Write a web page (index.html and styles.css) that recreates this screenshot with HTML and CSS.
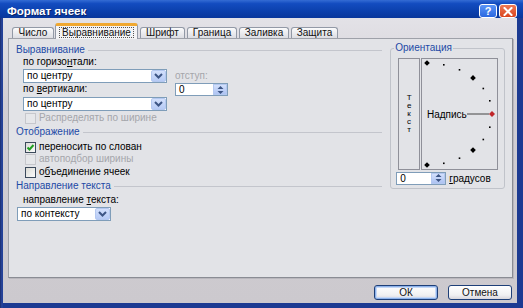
FILE: index.html
```html
<!DOCTYPE html>
<html lang="ru">
<head>
<meta charset="utf-8">
<title>Формат ячеек</title>
<link rel="stylesheet" href="styles.css">
</head>
<body>
<div class="window">
  <div class="titlebar">
    <span class="title">Формат ячеек</span>
    <div class="caption-buttons">
      <span class="cap-btn help">?</span>
      <span class="cap-btn close"><svg width="10" height="9" viewBox="0 0 10 9"><path d="M1.5 1 L8.5 8 M8.5 1 L1.5 8" stroke="#fff" stroke-width="2" stroke-linecap="square"/></svg></span>
    </div>
  </div>
  <div class="frame">
    <div class="tabs">
      <span class="tab">Число</span>
      <span class="tab active"><span class="focus">Выравнивание</span></span>
      <span class="tab">Шрифт</span>
      <span class="tab">Граница</span>
      <span class="tab">Заливка</span>
      <span class="tab">Защита</span>
    </div>
    <div class="panel">
      <div class="left">
        <div class="group-head"><span>Выравнивание</span></div>
        <div class="align-grid">
          <div class="label">по горизо<u>н</u>тали:</div>
          <div></div>
          <div class="combo row-end"><span class="combo-text">по центру</span><span class="drop"><svg width="9" height="6" viewBox="0 0 9 6"><path d="M1 1 L4.5 4.5 L8 1" fill="none" stroke="#3d5585" stroke-width="2"/></svg></span></div>
          <div class="label disabled indent-label">отступ:</div>
          <div class="label">по <u>в</u>ертикали:</div>
          <div class="spin indent-spin"><span class="spin-text">0</span><span class="spin-btn"><svg width="9" height="10" viewBox="0 0 9 10"><path d="M1.5 4 L4.5 1 L7.5 4 Z M1.5 6 L4.5 9 L7.5 6 Z" fill="#3d5585"/></svg></span></div>
          <div class="combo row-start"><span class="combo-text">по центру</span><span class="drop"><svg width="9" height="6" viewBox="0 0 9 6"><path d="M1 1 L4.5 4.5 L8 1" fill="none" stroke="#3d5585" stroke-width="2"/></svg></span></div>
          <div></div>
        </div>
        <div class="check disabled first-check"><span class="box"></span><span>Распределять по ширине</span></div>
        <div class="group-head head-2"><span>Отображение</span></div>
        <div class="check check-a"><span class="box"><svg width="9" height="9" viewBox="0 0 9 9"><path d="M1.5 4.5 L3.5 6.5 L7.5 2" fill="none" stroke="#21a121" stroke-width="2"/></svg></span><span>переносить по слован</span></div>
        <div class="check disabled"><span class="box"></span><span>автоподбор ширины</span></div>
        <div class="check check-c"><span class="box"></span><span>о<u>б</u>ъединение ячеек</span></div>
        <div class="group-head head-3"><span>Направление текста</span></div>
        <div class="label sub-label">направление <u>т</u>екста:</div>
        <div class="combo short"><span class="combo-text">по контексту</span><span class="drop"><svg width="9" height="6" viewBox="0 0 9 6"><path d="M1 1 L4.5 4.5 L8 1" fill="none" stroke="#3d5585" stroke-width="2"/></svg></span></div>
      </div>
      <fieldset class="orient">
        <legend>Ориентация</legend>
        <div class="orient-boxes">
          <div class="vbox">
            <span>Т</span><span>е</span><span>к</span><span>с</span><span>т</span>
          </div>
          <div class="arcbox">
            <svg width="75" height="110" viewBox="0 0 75 110">
              <g fill="#000">
                <polygon points="5,1.2 7.8,4 5,6.8 2.2,4"/>
                <rect x="21" y="5" width="1.6" height="1.6"/>
                <rect x="36.7" y="10" width="1.6" height="1.6"/>
                <polygon points="51,16.1 53.8,18.9 51,21.7 48.2,18.9"/>
                <rect x="60.5" y="28.7" width="1.6" height="1.6"/>
                <rect x="67" y="41" width="1.6" height="1.6"/>
                <rect x="67" y="67.4" width="1.6" height="1.6"/>
                <rect x="60.5" y="79.7" width="1.6" height="1.6"/>
                <polygon points="51,88.3 53.8,91.1 51,93.9 48.2,91.1"/>
                <rect x="36.7" y="98.4" width="1.6" height="1.6"/>
                <rect x="21" y="103.5" width="1.6" height="1.6"/>
                <polygon points="5,103.2 7.8,106 5,108.8 2.2,106"/>
              </g>
              <line x1="45" y1="55" x2="67" y2="55" stroke="#444" stroke-width="1"/>
              <polygon points="70,52 73,55 70,58 67,55" fill="#c0262a"/>
              <text x="5" y="58.5" font-family="Liberation Sans, Arial, sans-serif" font-size="10" fill="#000">Надпись</text>
            </svg>
          </div>
        </div>
        <div class="deg-row">
          <div class="spin deg-spin"><span class="spin-text">0</span><span class="spin-btn"><svg width="9" height="10" viewBox="0 0 9 10"><path d="M1.5 4 L4.5 1 L7.5 4 Z M1.5 6 L4.5 9 L7.5 6 Z" fill="#3d5585"/></svg></span></div>
          <span class="deg-label"><u>г</u>радусов</span>
        </div>
      </fieldset>
    </div>
    <div class="buttons">
      <span class="btn default">ОК</span>
      <span class="btn">Отмена</span>
    </div>
  </div>
</div>
</body>
</html>
```

FILE: styles.css
```css
* { box-sizing: border-box; }
html, body { margin: 0; padding: 0; }
body {
  width: 523px;
  height: 308px;
  overflow: hidden;
  background: #14307f;
  font-family: "Liberation Sans", Arial, sans-serif;
  font-size: 10px;
  color: #000;
}
u { text-decoration: underline; text-underline-offset: 1px; }

.window {
  width: 523px;
  height: 308px;
  display: flex;
  flex-direction: column;
  background: linear-gradient(90deg, #1a2c6e 0, #2a48a0 2px, #1c3a92 3px, #1c3a92 100%);
}

.titlebar {
  height: 18px;
  flex: none;
  display: flex;
  align-items: center;
  justify-content: space-between;
  padding: 3px 6px 0 7px;
  background: linear-gradient(#346cd4 0%, #134cc0 20%, #0c41ae 60%, #09379c 100%);
}
.title {
  color: #fff;
  font-weight: bold;
  font-size: 11.5px;
  text-shadow: 1px 1px 0 #0b2366;
}
.caption-buttons { display: flex; gap: 2px; margin-top: 1px; }
.cap-btn {
  width: 18px;
  height: 14px;
  border: 1px solid #fff;
  border-radius: 3px;
  display: flex;
  align-items: center;
  justify-content: center;
  color: #fff;
  font-weight: bold;
  font-size: 11px;
}
.help { background: linear-gradient(#5b95f7, #2a67e0); }
.close { background: linear-gradient(#ef7a55, #d9441e); }

.frame {
  flex: 1;
  margin: 0 6px 5px 3px;
  background: linear-gradient(#e3e2e7, #d1ced4 30%, #ccc9ce);
  padding: 4px 4px 3px 5px;
  display: flex;
  flex-direction: column;
}

.tabs {
  height: 16px;
  flex: none;
  display: flex;
  align-items: flex-end;
  gap: 2px;
  padding-left: 4px;
  position: relative;
  z-index: 1;
}
.tab {
  height: 11px;
  border: 1px solid #9299a6;
  border-bottom: none;
  border-radius: 3px 3px 0 0;
  background: linear-gradient(#fbfbfc, #dcdde3);
  line-height: 10px;
  text-align: center;
  color: #111;
}
.tab:nth-child(1) { width: 42px; }
.tab:nth-child(3) { width: 45px; }
.tab:nth-child(4) { width: 50px; }
.tab:nth-child(5) { width: 50px; }
.tab:nth-child(6) { width: 47px; }
.tab.active {
  width: 83px;
  height: 16px;
  margin-left: -1px;
  margin-bottom: -1px;
  border-top: 3px solid #f0a830;
  background: #f3f3f5;
  display: flex;
  align-items: center;
  justify-content: center;
  padding-bottom: 1px;
}
.focus {
  border: 1px dotted #555;
  padding: 0 2px;
  line-height: 9px;
}

.panel {
  flex: 1;
  border: 1px solid #9ea1a9;
  border-right-color: #8a8c94;
  border-bottom-color: #8a8c94;
  box-shadow: 1px 1px 0 #b9b7bd;
  background: #e2e3e7;
  padding: 0 7px;
  display: flex;
  align-items: flex-start;
  gap: 8px;
}

.left {
  width: 367px;
  padding-top: 5px;
  display: flex;
  flex-direction: column;
}

.group-head {
  height: 12px;
  line-height: 12px;
  display: flex;
  align-items: center;
  color: #1d4aa6;
}
.group-head::after {
  content: "";
  flex: 1;
  height: 1px;
  margin-left: 3px;
  background: #c3c5cc;
}
.head-2 { margin-top: 2px; }
.head-3 { margin-top: 2px; }

.label { height: 12px; line-height: 12px; white-space: nowrap; }
.disabled { color: #a5a6ab; }

.align-grid {
  margin-left: 7px;
  display: grid;
  grid-template-columns: 144px 53px;
  grid-template-rows: 12px 15px 13px 15px;
  column-gap: 8px;
}
.row-end { align-self: end; }
.row-start { align-self: start; margin-top: 1px; }
.indent-label { align-self: center; }
.indent-spin { align-self: start; }

.combo {
  height: 14px;
  border: 1px solid #7f9db9;
  background: #fff;
  display: flex;
  align-items: stretch;
}
.combo.short { width: 94px; margin-left: 1px; margin-top: 1px; }
.combo-text { flex: 1; padding-left: 3px; line-height: 12px; }
.drop {
  width: 15px;
  border: 1px solid #b4c8f0;
  border-radius: 2px;
  background: linear-gradient(#d3e0fc, #b6caf5);
  display: flex;
  align-items: center;
  justify-content: center;
}

.spin {
  height: 13px;
  border: 1px solid #7f9db9;
  background: #fff;
  display: flex;
  align-items: stretch;
}
.spin-text { flex: 1; padding-left: 3px; line-height: 11px; }
.spin-btn {
  width: 14px;
  border: 1px solid #b4c8f0;
  background: linear-gradient(#d3e0fc, #aec3f2);
  display: flex;
  align-items: center;
  justify-content: center;
}

.check {
  height: 12px;
  line-height: 12px;
  display: flex;
  align-items: center;
  margin-left: 9px;
  white-space: nowrap;
}
.check .box {
  width: 11px;
  height: 11px;
  border: 1px solid #3c4a5c;
  background: linear-gradient(135deg, #dcdcd6, #fafafa);
  margin-right: 3px;
  display: flex;
  align-items: center;
  justify-content: center;
  flex: none;
}
.check.disabled .box {
  border-color: #c6c7cc;
  background: #e6e7ea;
}
.first-check { margin-top: 1px; }
.check-a { margin-top: 3px; }
.check-c { margin-top: 1px; }
.sub-label { margin-top: 2px; margin-left: 7px; }

.orient {
  margin: 3px 0 0 0;
  width: 115px;
  padding: 4px 6px 4px 7px;
  border: 1px solid #c0c3ca;
  border-radius: 3px;
  min-width: 0;
}
.orient legend {
  margin-left: -4px;
  padding: 0 1px;
  line-height: 12px;
  color: #1d4aa6;
}
.orient-boxes { display: flex; gap: 1px; }
.vbox {
  width: 22px;
  height: 112px;
  border: 1px solid #8f9099;
  display: flex;
  flex-direction: column;
  align-items: center;
  justify-content: center;
  font-size: 8px;
  line-height: 8px;
}
.vbox span { display: block; height: 8px; }
.arcbox {
  width: 77px;
  height: 112px;
  border: 1px solid #8f9099;
}
.arcbox svg { display: block; }
.deg-row {
  margin-top: 2px;
  height: 12px;
  display: flex;
  align-items: center;
}
.deg-spin { width: 50px; height: 13px; margin-left: -2px; }
.deg-label { margin-left: 3px; }

.buttons {
  flex: none;
  height: 15px;
  margin-top: 7px;
  padding-right: 1px;
  display: flex;
  justify-content: flex-end;
  gap: 10px;
}
.btn {
  width: 64px;
  height: 15px;
  border: 1px solid #1e3f78;
  border-radius: 3px;
  background: linear-gradient(#ffffff, #f0f0f2 70%, #d8d6dc);
  display: flex;
  align-items: center;
  justify-content: center;
  color: #111;
}
.btn.default {
  box-shadow: inset 0 0 0 1px #8db2ea, inset 0 0 0 2px #c6d8f6;
}
```
